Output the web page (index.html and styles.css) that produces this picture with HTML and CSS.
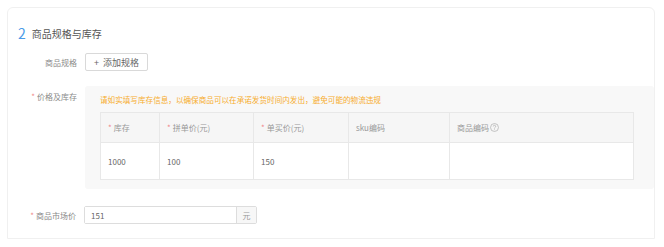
FILE: index.html
```html
<!DOCTYPE html>
<html lang="zh-CN">
<head>
    <meta charset="UTF-8">
    <meta name="viewport" content="width=device-width, initial-scale=1.0">
    <title>商品规格与库存</title>
    <link rel="stylesheet" href="styles.css">
</head>
<body>
    <div class="card">
        <h2 class="section-title"><span class="step">2</span>商品规格与库存</h2>

        <div class="form-row spec-row">
            <label class="form-label">商品规格</label>
            <button class="add-btn"><span class="plus">+</span>添加规格</button>
        </div>

        <div class="form-row stock-row">
            <label class="form-label"><i class="req">*</i>价格及库存</label>
            <div class="stock-box">
                <p class="stock-tip">请如实填写库存信息，以确保商品可以在承诺发货时间内发出，避免可能的物流违规</p>
                <table class="sku-table">
                    <thead>
                        <tr>
                            <th class="col-stock"><i class="req">*</i>库存</th>
                            <th class="col-group"><i class="req">*</i>拼单价(元)</th>
                            <th class="col-single"><i class="req">*</i>单买价(元)</th>
                            <th class="col-sku">sku编码</th>
                            <th class="col-code">商品编码<svg class="help-icon" viewBox="0 0 12 12" width="9" height="9"><circle cx="6" cy="6" r="5.3" fill="none" stroke="#aaa" stroke-width="0.9"/><path d="M4.4 4.6a1.6 1.6 0 1 1 2.3 1.4c-.5.3-.7.6-.7 1.1v.4" fill="none" stroke="#aaa" stroke-width="0.9"/><circle cx="6" cy="9" r="0.55" fill="#aaa"/></svg></th>
                        </tr>
                    </thead>
                    <tbody>
                        <tr>
                            <td>1000</td>
                            <td>100</td>
                            <td>150</td>
                            <td></td>
                            <td></td>
                        </tr>
                    </tbody>
                </table>
            </div>
        </div>

        <div class="form-row price-row">
            <label class="form-label"><i class="req">*</i>商品市场价</label>
            <div class="input-group">
                <input type="text" class="price-input" value="151">
                <span class="input-addon">元</span>
            </div>
        </div>
    </div>
</body>
</html>
```

FILE: styles.css
```css
body {
    margin: 0;
    background: #fff;
    font-family: "Noto Sans CJK SC", "Noto Sans", sans-serif;
    color: #666;
}
.card {
    margin: 7px 9px 0 7px;
    padding: 17px 0 14px 10px;
    border: 1px solid #f0f0f0;
    border-radius: 6px 6px 0 0;
}
.section-title {
    margin: 0;
    height: 16px;
    display: flex;
    align-items: center;
    font-size: 10px;
    font-weight: normal;
    color: #555;
}
.step {
    font-size: 14px;
    color: #4a9be8;
    margin-right: 6px;
}
.form-row {
    display: flex;
    align-items: flex-start;
}
.form-label {
    width: 59px;
    margin-right: 8px;
    text-align: right;
    font-size: 8px;
    color: #8a8a8a;
    white-space: nowrap;
}
.req {
    font-style: normal;
    color: #f08a8a;
    margin-right: 2px;
}
.spec-row {
    margin-top: 12px;
    align-items: center;
}
.add-btn {
    width: 63px;
    height: 18px;
    padding: 0;
    border: 1px solid #d9d9d9;
    border-radius: 2px;
    background: #fff;
    font-family: inherit;
    font-size: 9px;
    color: #666;
}
.plus {
    margin-right: 4px;
}
.stock-row {
    margin-top: 15px;
}
.stock-row .form-label {
    padding-top: 6px;
    line-height: 10px;
}
.stock-box {
    flex: 1;
    padding: 9px 20px 9px 15px;
    background: #f8f8f8;
    border-radius: 3px;
}
.stock-tip {
    margin: 0 0 7px;
    font-size: 7.6px;
    line-height: 10px;
    color: #f7ad2e;
    white-space: nowrap;
}
.sku-table {
    width: 534px;
    table-layout: fixed;
    border-collapse: collapse;
    background: #fff;
    font-size: 8px;
}
.sku-table th,
.sku-table td {
    border: 1px solid #e8e8e8;
    padding: 0 0 0 7px;
    text-align: left;
    font-weight: normal;
}
.sku-table th {
    height: 29px;
    background: #f6f6f6;
    color: #999;
}
.sku-table td {
    height: 36px;
    color: #666;
}
.col-stock { width: 51px; }
.col-group { width: 86px; }
.col-single { width: 87px; }
.col-sku { width: 93px; }
.help-icon {
    margin-left: 1px;
    vertical-align: -1px;
}
.price-row {
    margin-top: 17px;
    align-items: center;
}
.price-row .form-label {
    width: 58px;
}
.input-group {
    display: flex;
    width: 173px;
    height: 18px;
    border: 1px solid #ddd;
    box-sizing: border-box;
    border-radius: 2px;
}
.price-input {
    flex: 1;
    min-width: 0;
    border: 0;
    padding: 0 0 0 6px;
    font-family: inherit;
    font-size: 8px;
    color: #666;
    outline: none;
}
.input-addon {
    width: 19px;
    border-left: 1px solid #ddd;
    background: #f7f7f7;
    font-size: 8px;
    color: #999;
    display: flex;
    align-items: center;
    justify-content: center;
}
```
